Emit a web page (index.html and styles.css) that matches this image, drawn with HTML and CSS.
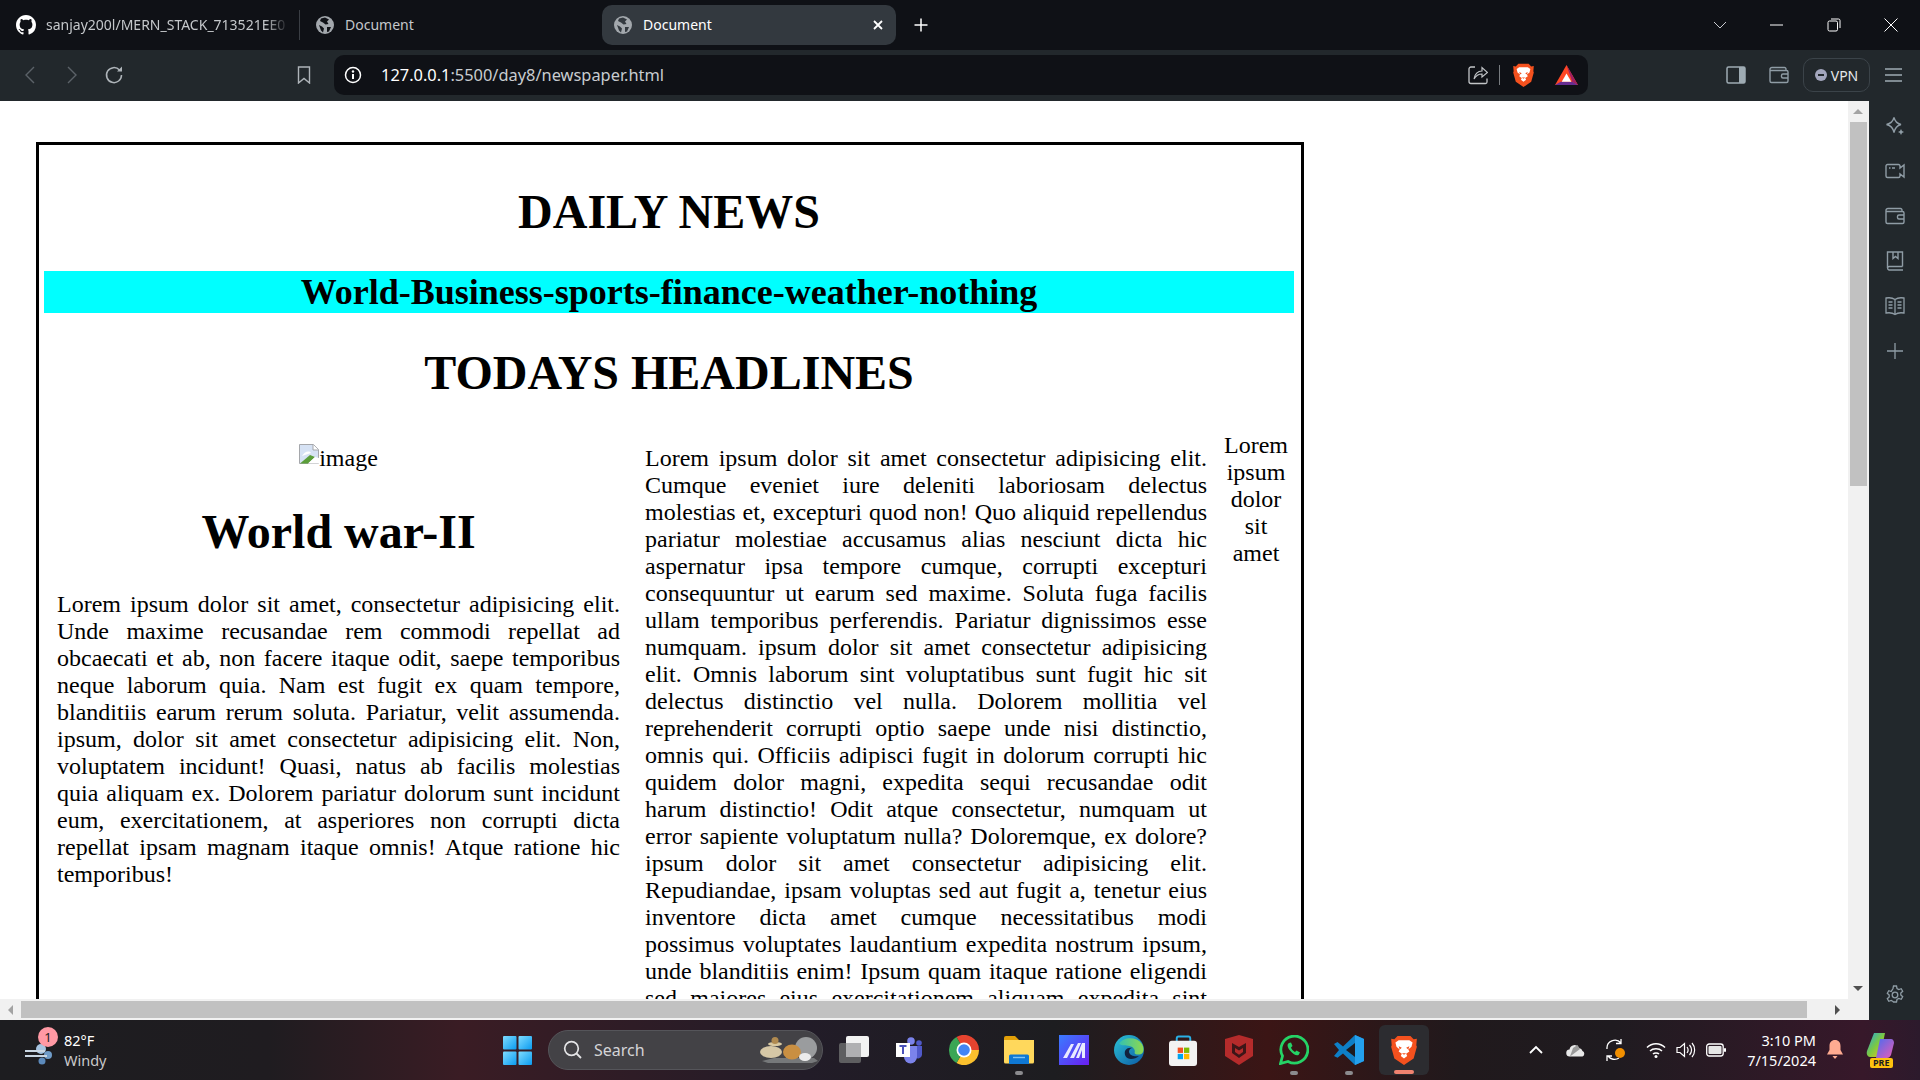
FILE: index.html
```html
<!DOCTYPE html>
<html lang="en">
<head>
    <meta charset="UTF-8" />
    <title>Document</title>
    <link rel="stylesheet" href="styles.css">
</head>
<body>
<div class="browser">

    <div class="titlebar">
        <div class="tab tab-first">
            <svg class="tab-icon" viewBox="0 0 16 16" width="20" height="20"><path fill="#fff" d="M8 0C3.58 0 0 3.58 0 8c0 3.54 2.29 6.53 5.47 7.59.4.07.55-.17.55-.38 0-.19-.01-.82-.01-1.49-2.01.37-2.53-.49-2.69-.94-.09-.23-.48-.94-.82-1.13-.28-.15-.68-.52-.01-.53.63-.01 1.08.58 1.23.82.72 1.21 1.87.87 2.33.66.07-.52.28-.87.51-1.07-1.78-.2-3.64-.89-3.64-3.95 0-.87.31-1.59.82-2.15-.08-.2-.36-1.02.08-2.12 0 0 .67-.21 2.2.82.64-.18 1.32-.27 2-.27.68 0 1.36.09 2 .27 1.53-1.04 2.2-.82 2.2-.82.44 1.1.16 1.92.08 2.12.51.56.82 1.27.82 2.15 0 3.07-1.87 3.75-3.65 3.95.29.25.54.73.54 1.48 0 1.07-.01 1.93-.01 2.2 0 .21.15.46.55.38A8.013 8.013 0 0016 8c0-4.42-3.58-8-8-8z"/></svg>
            <span class="tab-title tab-title-fade">sanjay200l/MERN_STACK_713521EE0</span>
        </div>
        <div class="tab tab-second">
            <svg class="tab-icon" viewBox="0 0 20 20" width="20" height="20"><circle cx="10" cy="10" r="9" fill="#a3a8ad"/><path fill="#0f1116" d="M10 2.5 6 3.6 5 6l3 1.5 2.5 2 3-.5L12 6.500 14 4.500zM4 10l3 1.500 2 2-1 4-2-2zM12 12h4l-2 4.500-2 .5z"/></svg>
            <span class="tab-title">Document</span>
        </div>
        <div class="tab tab-active">
            <svg class="tab-icon" viewBox="0 0 20 20" width="20" height="20"><circle cx="10" cy="10" r="9" fill="#a3a8ad"/><path fill="#33393f" d="M10 2.500 6 3.600 5 6l3 1.500 2.500 2 3-.5L12 6.500 14 4.500zM4 10l3 1.500 2 2-1 4-2-2zM12 12h4l-2 4.500-2 .5z"/></svg>
            <span class="tab-title tab-title-active">Document</span>
            <svg class="tab-close" viewBox="0 0 12 12" width="12" height="12"><path d="M2 2l8 8M10 2l-8 8" stroke="#fff" stroke-width="1.800"/></svg>
        </div>
        <svg class="tab-new" viewBox="0 0 16 16" width="16" height="16"><path d="M8 1.500v13M1.500 8h13" stroke="#fff" stroke-width="1.500"/></svg>
        <div class="window-controls">
            <div class="win-btn"><svg viewBox="0 0 14 8" width="14" height="8"><path d="M1 1l6 6 6-6" fill="none" stroke="#c9ccd0" stroke-width="1"/></svg></div>
            <div class="win-btn"><svg viewBox="0 0 14 2" width="14" height="2"><path d="M0 1h13" stroke="#fff" stroke-width="1"/></svg></div>
            <div class="win-btn"><svg viewBox="0 0 14 14" width="14" height="14"><rect x="1" y="3" width="9.500" height="10" rx="1.500" fill="none" stroke="#fff"/><path d="M4 1h7.500A1.500 1.500 0 0 1 13 2.500V10" fill="none" stroke="#fff"/></svg></div>
            <div class="win-btn"><svg viewBox="0 0 14 14" width="14" height="14"><path d="M.5.500l13 13M13.500.500l-13 13" stroke="#fff" stroke-width="1"/></svg></div>
        </div>
    </div>

    <div class="toolbar">
        <div class="nav-btn"><svg viewBox="0 0 12 20" width="12" height="20"><path d="M10 2 2 10l8 8" fill="none" stroke="#5b6268" stroke-width="1.400"/></svg></div>
        <div class="nav-btn"><svg viewBox="0 0 12 20" width="12" height="20"><path d="M2 2l8 8-8 8" fill="none" stroke="#5b6268" stroke-width="1.400"/></svg></div>
        <div class="nav-btn"><svg viewBox="0 0 20 20" width="20" height="20"><path d="M15.500 5A7.500 7.500 0 1 0 17.500 10" fill="none" stroke="#aeb4b9" stroke-width="1.500"/><path d="M13 6.500h5v-5z" fill="#aeb4b9"/></svg></div>
        <div class="bookmark-btn"><svg viewBox="0 0 14 18" width="14" height="18"><path d="M1.500 1h11v16L7 12.500 1.500 17z" fill="none" stroke="#aeb4b9" stroke-width="1.400"/></svg></div>
        <div class="address-bar">
            <svg class="info-icon" viewBox="0 0 18 18" width="18" height="18"><circle cx="9" cy="9" r="7.500" fill="none" stroke="#fff" stroke-width="1.500"/><path d="M9 8v5" stroke="#fff" stroke-width="2"/><circle cx="9" cy="5.500" r="1.200" fill="#fff"/></svg>
            <span class="url"><span class="url-host">127.0.0.1</span>:5500/day8/newspaper.html</span>
            <svg class="share-icon" viewBox="0 0 20 20" width="20" height="20"><path d="M7 2.500H3A2 2 0 0 0 1 4.500V17a2 2 0 0 0 2 2h14.500a1.500 1.500 0 0 0 1.500-1.500V14" transform="translate(0 -.500)" fill="none" stroke="#c2c5c8" stroke-width="1.300"/><path d="M6 14C6.500 9 10 6 14 6V2.500L19.500 7.500 14 12V9c-3 0-6 1.500-8 5z" fill="none" stroke="#c2c5c8" stroke-width="1.200"/></svg>
            <span class="addr-divider"></span>
            <svg class="brave-small" viewBox="0 0 24 28" width="21" height="24"><use href="#brave-lion"/></svg>
            <svg class="bat-icon" viewBox="0 0 24 22" width="23" height="21"><path d="M12 0 24 21H0z" fill="#ff4724"/><path d="M12 0 24 21 18 17.500z" fill="#9e1f63"/><path d="M0 21h24l-6-3.500H6z" fill="#662d91"/><path d="M12 9l5 8.500H7z" fill="#fff"/></svg>
        </div>
        <div class="tool-btn tool-panel"><svg viewBox="0 0 20 18" width="20" height="18"><rect x="1" y="1" width="18" height="16" rx="1.500" fill="none" stroke="#9eabb3" stroke-width="1.500"/><rect x="13" y="1" width="6" height="16" fill="#9eabb3"/></svg></div>
        <div class="tool-btn tool-wallet"><svg viewBox="0 0 20 18" width="20" height="18"><use href="#wallet-shape"/></svg></div>
        <div class="vpn-pill"><span class="vpn-dot"></span>VPN</div>
        <div class="menu-btn"><svg viewBox="0 0 18 14" width="18" height="14"><path d="M0 1h17M0 7h17M0 13h17" stroke="#9eabb3" stroke-width="1.400"/></svg></div>
    </div>

    <div class="main">
        <div class="content">
            <div class="content-row">
                <div class="page">
                    <div class="newspaper">
                        <h1 class="title">DAILY NEWS</h1>
                        <h2 class="nav-strip">World-Business-sports-finance-weather-nothing</h2>
                        <h1 class="title">TODAYS HEADLINES</h1>
                        <div class="columns">
                            <div class="col-left">
                                <div class="image-line">
                                    <svg class="broken-img" viewBox="0 0 20 20" width="20" height="20"><path d="M.500.500h14l5 5v14H.500z" fill="#d6e2f4" stroke="#a5a7ab"/><path d="M14 .500v5.500h5.500" fill="#fff" stroke="#a5a7ab"/><path d="M3 12c2-4 7-6 9-3l-9 3z" fill="#fff"/><path d="M1 19.500 11 11l5 2-7 6.500z" fill="#5b9e3a"/><path d="M9 19.500 16 13l4 1v5.500z" fill="#fff"/></svg>image
                                </div>
                                <h1 class="title">World war-II</h1>
                                <p class="story">Lorem ipsum dolor sit amet, consectetur adipisicing elit. Unde maxime recusandae rem commodi repellat ad obcaecati et ab, non facere itaque odit, saepe temporibus neque laborum quia. Nam est fugit ex quam tempore, blanditiis earum rerum soluta. Pariatur, velit assumenda. ipsum, dolor sit amet consectetur adipisicing elit. Non, voluptatem incidunt! Quasi, natus ab facilis molestias quia&nbsp;aliquam ex. Dolorem pariatur dolorum sunt incidunt eum, exercitationem, at asperiores non corrupti dicta repellat ipsam magnam itaque omnis! Atque ratione hic temporibus!</p>
                            </div>
                            <div class="col-middle">
                                <p class="story">Lorem ipsum dolor sit amet consectetur adipisicing elit. Cumque eveniet iure deleniti laboriosam delectus molestias et, excepturi quod non! Quo aliquid repellendus pariatur molestiae accusamus alias nesciunt dicta hic aspernatur ipsa tempore cumque, corrupti excepturi consequuntur ut earum sed maxime. Soluta fuga facilis ullam temporibus perferendis. Pariatur dignissimos esse numquam. ipsum dolor sit amet consectetur adipisicing elit. Omnis laborum sint voluptatibus sunt fugit hic sit delectus distinctio vel nulla. Dolorem mollitia vel reprehenderit corrupti optio saepe unde nisi distinctio, omnis qui. Officiis adipisci fugit in dolorum corrupti hic quidem dolor magni, expedita sequi recusandae odit harum distinctio! Odit atque consectetur, numquam ut error sapiente voluptatum nulla? Doloremque, ex dolore? ipsum dolor sit amet consectetur adipisicing elit. Repudiandae, ipsam voluptas sed aut fugit a, tenetur eius inventore dicta amet cumque necessitatibus modi possimus voluptates laudantium expedita nostrum ipsum, unde blanditiis enim! Ipsum quam itaque ratione eligendi sed maiores eius exercitationem aliquam expedita sint quia.</p>
                            </div>
                            <div class="col-right">Lorem ipsum dolor sit amet</div>
                        </div>
                    </div>
                </div>
                <div class="v-scroll">
                    <div class="scroll-btn"><span class="arrow-up"></span></div>
                    <div class="v-thumb"></div>
                    <div class="v-track"></div>
                    <div class="scroll-btn"><span class="arrow-down"></span></div>
                </div>
            </div>
            <div class="h-scroll">
                <div class="h-btn"><span class="arrow-left"></span></div>
                <div class="h-thumb"></div>
                <div class="h-track"></div>
                <div class="h-btn"><span class="arrow-right"></span></div>
                <div class="scroll-corner"></div>
            </div>
        </div>
        <div class="sidebar">
            <svg viewBox="0 0 20 20" width="20" height="20"><path d="M9 1.500c1 4 3 6 7 7-4 1-6 3-7 8-1-5-3-7-7.500-8C6 7.500 8 5.500 9 1.500z" fill="none" stroke="#8f9ca5" stroke-width="1.400"/><path d="M16 13l1 2 2 1-2 1-1 2-1-2-2-1 2-1z" fill="#8f9ca5"/></svg>
            <svg viewBox="0 0 20 16" width="20" height="16"><path d="M15 5V3a1.500 1.500 0 0 0-1.500-1.500h-11A1.500 1.500 0 0 0 1 3v10a1.500 1.500 0 0 0 1.500 1.500h11A1.500 1.500 0 0 0 15 13v-2l4 3V2z" fill="none" stroke="#8f9ca5" stroke-width="1.400"/><path d="M4 5h1.500M7 5h3" stroke="#8f9ca5" stroke-width="1.400"/></svg>
            <svg viewBox="0 0 20 18" width="20" height="18"><use href="#wallet-shape"/></svg>
            <svg viewBox="0 0 18 20" width="18" height="20"><path d="M16.500 15.500H3A1.800 1.800 0 0 0 3 19h14M1.500 17V1h15v14.500M7 1v6.500l2.500-2 2.500 2V1" fill="none" stroke="#8f9ca5" stroke-width="1.400"/></svg>
            <svg viewBox="0 0 20 20" width="20" height="20"><path d="M10 3.500C8 2 4 1.500 1 2v15c3-.5 7 0 9 1.500 2-1.500 6-2 9-1.500V2c-3-.5-7 0-9 1.500zM10 3.500v15M3.500 6h4M3.500 9h4M3.500 12h4M12.500 6h4M12.500 9h4M12.500 12h4" fill="none" stroke="#8f9ca5" stroke-width="1.300"/></svg>
            <svg viewBox="0 0 16 16" width="16" height="16"><path d="M8 0v16M0 8h16" stroke="#8f9ca5" stroke-width="1.300"/></svg>
            <svg class="side-gear" viewBox="0 0 20 20" width="20" height="20"><path d="M8.500 1h3l.5 2.500 1.800 1 2.400-.8 1.500 2.600-1.900 1.700v2l1.900 1.700-1.500 2.600-2.400-.8-1.800 1-.5 2.500h-3L8 16.500l-1.800-1-2.400.8-1.500-2.600 1.900-1.700v-2L2.300 8.300l1.500-2.600 2.400.8L8 3.500z" fill="none" stroke="#8f9ca5" stroke-width="1.300"/><circle cx="10" cy="10" r="2.800" fill="none" stroke="#8f9ca5" stroke-width="1.300"/></svg>
        </div>
    </div>

    <div class="taskbar">
        <div class="weather">
            <svg class="weather-icon" viewBox="0 0 32 24" width="32" height="24"><circle cx="17" cy="8" r="5" fill="#a6c4e0"/><circle cx="24" cy="14" r="4" fill="#6f9cc8"/><circle cx="18" cy="20" r="3.500" fill="#5c8abb"/><path d="M1 10h20M1 15h22" stroke="#c9d6e2" stroke-width="2.200"/></svg>
            <span class="badge">1</span>
            <div class="weather-text"><span>82°F</span><span class="weather-sub">Windy</span></div>
        </div>
        <svg class="start" viewBox="0 0 29 29" width="29" height="29"><defs><linearGradient id="win" x1="0" y1="0" x2="1" y2="1"><stop offset="0" stop-color="#7fdcff"/><stop offset="1" stop-color="#0a9bf0"/></linearGradient></defs><rect width="13.500" height="13.500" rx="1" fill="url(#win)"/><rect x="15.500" width="13.500" height="13.500" rx="1" fill="url(#win)"/><rect y="15.500" width="13.500" height="13.500" rx="1" fill="url(#win)"/><rect x="15.500" y="15.500" width="13.500" height="13.500" rx="1" fill="url(#win)"/></svg>
        <div class="search">
            <svg viewBox="0 0 20 20" width="20" height="20"><circle cx="8.500" cy="8.500" r="6.800" fill="none" stroke="#e4e4e6" stroke-width="1.700"/><path d="M13.500 13.500 18 18" stroke="#e4e4e6" stroke-width="1.800"/></svg>
            <span class="search-text">Search</span>
            <svg class="pebbles" viewBox="0 0 60 26" width="60" height="26"><path d="M2 24 14 21h40l4 3-6 2H8z" fill="#76787a"/><circle cx="46" cy="11" r="11" fill="#9a9c9e"/><ellipse cx="15" cy="7" rx="7" ry="2" fill="#d9c8a0"/><circle cx="15" cy="3.500" r="3.500" fill="#b08a50"/><ellipse cx="11" cy="15" rx="11" ry="6" fill="#d6c7a6"/><ellipse cx="32" cy="15" rx="9" ry="7.500" fill="#c98f42"/><ellipse cx="45" cy="20" rx="6" ry="4" fill="#ececec"/></svg>
        </div>
        <div class="task-item"><svg viewBox="0 0 30 30" width="30" height="30"><rect y="8" width="22" height="20" rx="2" fill="#5e5e60"/><rect x="7" y="1" width="23" height="21" rx="2" fill="#f2f2f2"/><rect x="7" y="8" width="15" height="14" fill="#b0b0b2"/></svg></div>
        <div class="task-item"><svg viewBox="0 0 28 28" width="28" height="28"><circle cx="16" cy="5" r="3.800" fill="#7b83eb"/><circle cx="24" cy="7" r="2.800" fill="#5059c9"/><path d="M20 10h7v9a4 4 0 0 1-7 2z" fill="#5059c9"/><path d="M9 10h13v11a6.500 6.500 0 0 1-13 0z" fill="#7b83eb"/><rect x="1" y="7" width="14" height="14" fill="#fff"/><path d="M4.500 10h7M8 10v8" stroke="#4b53bc" stroke-width="2"/></svg></div>
        <div class="task-item"><svg viewBox="0 0 30 30" width="30" height="30"><path d="M15 15 7.500 2A15 15 0 0 1 30 15z" fill="#e5432f"/><path d="M15 15h15A15 15 0 0 1 7.500 28z" fill="#fbc02d"/><path d="M15 15 7.500 28A15 15 0 0 1 7.500 2z" fill="#3aa655"/><circle cx="15" cy="15" r="7.500" fill="#fff"/><circle cx="15" cy="15" r="5.800" fill="#4285f4"/></svg></div>
        <div class="task-item"><svg viewBox="0 0 30 28" width="30" height="28"><path d="M0 2a2 2 0 0 1 2-2h9l4 4h-15z" fill="#e3a008"/><path d="M0 4h30v22a1.500 1.500 0 0 1-1.500 1.500h-27A1.500 1.500 0 0 1 0 26z" fill="#ffd85c"/><path d="M5 20a1.500 1.500 0 0 1 1.500-1.500h17A1.500 1.500 0 0 1 25 20v8H5z" fill="#0f78d4"/><path d="M9 21.500h12" stroke="#7cc3f5" stroke-width="1.400"/></svg><span class="run-dot"></span></div>
        <div class="task-item"><svg viewBox="0 0 30 30" width="30" height="30"><defs><linearGradient id="aiapp" x1="0" y1="0" x2="1" y2="1"><stop offset="0" stop-color="#3a7cff"/><stop offset="1" stop-color="#6a1ef0"/></linearGradient></defs><rect width="30" height="30" fill="url(#aiapp)"/><path d="M4 23 12 9h3L8 23zM11 23 19 8h3l-7 15zM17 23 23 8h3v15h-3v-8l-3 8z" fill="#e8eaff"/></svg></div>
        <div class="task-item"><svg viewBox="0 0 30 30" width="30" height="30"><defs><linearGradient id="edge1" x1="0" y1="0" x2="1" y2="1"><stop offset="0" stop-color="#2cc3d5"/><stop offset="1" stop-color="#0c59a4"/></linearGradient><linearGradient id="edge2" x1="0" y1="0" x2="1" y2="0"><stop offset="0" stop-color="#35c1b0"/><stop offset="1" stop-color="#8dd94e"/></linearGradient></defs><circle cx="15" cy="15" r="15" fill="url(#edge1)"/><path d="M5 9C9 2 22 1 28 9c2 3 2 7 .5 9-2 2-7 2-8 0 1-2 0-6-5-7-4-1-7 0-10.500-2z" fill="url(#edge2)"/><path d="M17 24c-5 0-7-4-6-8 1-3 5-4 8-3-3 0-4 2-4 4 1 4 6 5 10 4-2 2-5 3-8 3z" fill="#12233f"/></svg></div>
        <div class="task-item"><svg viewBox="0 0 30 32" width="29" height="31"><path d="M8 8V3.500A2 2 0 0 1 10 1.500h10A2 2 0 0 1 22 3.500V8" fill="none" stroke="#2ab0e6" stroke-width="2"/><rect y="6" width="29" height="26" rx="3" fill="#f3f3f3"/><rect x="9" y="13" width="5.500" height="5.500" fill="#f25022"/><rect x="15.500" y="13" width="5.500" height="5.500" fill="#7fba00"/><rect x="9" y="19.500" width="5.500" height="5.500" fill="#00a4ef"/><rect x="15.500" y="19.500" width="5.500" height="5.500" fill="#ffb900"/></svg></div>
        <div class="task-item"><svg viewBox="0 0 28 30" width="28" height="30"><path d="M0 4 14 0 28 4v17L14 30 0 21z" fill="#b52b2b"/><path d="M7 8 14 12 21 8v10l-7 5-7-5z" fill="#3d1618"/><path d="M10 13 14 15.500 18 13v4l-4 2.800-4-2.800z" fill="#b52b2b"/></svg></div>
        <div class="task-item"><svg viewBox="0 0 30 30" width="30" height="30"><path d="M1.500 28.500 3.500 21A13.500 13.500 0 1 1 9 26.500z" fill="none" stroke="#25d366" stroke-width="2.800"/><path d="M10 8c-2 1-2 4 1 7.500s6 5.500 8.500 4.500l1.500-2.500-3.500-2-1.500 1.500c-2-1-3.500-3-4-4.500L13.500 11l-1.500-3.500z" fill="#25d366"/></svg><span class="run-dot"></span></div>
        <div class="task-item"><svg viewBox="0 0 30 30" width="30" height="30"><path d="M21 0 30 4v22l-9 4-12-11.500-5.500 4.300L0 21l5-6-5-6 3.500-2L9 11.500z" fill="#0e7fc7"/><path d="M21 0 30 4v22l-9 4z" fill="#24a0ed"/><path d="M21 8 12 15l9 7z" fill="#1d1b20"/></svg><span class="run-dot"></span></div>
        <div class="task-item task-active"><svg viewBox="0 0 24 28" width="26" height="30"><use href="#brave-lion"/></svg><span class="run-bar"></span></div>

        <div class="tray">
            <div class="tray-item"><svg viewBox="0 0 14 10" width="14" height="10"><path d="M1 8l6-6 6 6" fill="none" stroke="#fff" stroke-width="1.800"/></svg></div>
            <div class="tray-item"><svg viewBox="0 0 20 14" width="20" height="14"><path d="M4 13.500a3.500 3.500 0 0 1-.5-7 5 5 0 0 1 9.500-1.500 4 4 0 0 1 3.500 3 3 3 0 0 1 0 5.500z" fill="#e8e8e8"/><path d="M7 5 11.500 2 14 6 4 13.500z" fill="#9a9a9a"/></svg></div>
            <div class="tray-item"><svg viewBox="0 0 22 24" width="22" height="24"><path d="M2 11a8 8 0 0 1 14-6M16 1v4.500h-5M14 20a8 8 0 0 1-11-2M2 23v-5h5" fill="none" stroke="#fff" stroke-width="1.300"/><circle cx="15" cy="15" r="5" fill="#f18f00"/></svg></div>
            <div class="tray-item tray-narrow"><svg viewBox="0 0 20 16" width="20" height="16"><path d="M1 5.500c5-5 13-5 18 0M4 9c3-3 9-3 12 0M7 12c1.500-1.500 4.500-1.500 6 0" fill="none" stroke="#fff" stroke-width="1.500"/><circle cx="10" cy="14.500" r="1.500" fill="#fff"/></svg></div>
            <div class="tray-item tray-narrow"><svg viewBox="0 0 20 16" width="20" height="16"><path d="M1 5.500h3L8.500 1.500v13L4 10.500H1z" fill="none" stroke="#fff" stroke-width="1.200"/><path d="M11 5c1.500 2 1.500 4 0 6M13.500 3c2.500 3 2.500 7 0 10M16 1c3.500 4 3.500 10 0 14" fill="none" stroke="#fff" stroke-width="1.200"/></svg></div>
            <div class="tray-item tray-narrow"><svg viewBox="0 0 20 14" width="20" height="14"><rect x=".700" y="1" width="16.500" height="12" rx="2.500" fill="none" stroke="#fff" stroke-width="1.300"/><rect x="2.500" y="3" width="13" height="8" rx="1" fill="#e6e6e6"/><rect x="18" y="5" width="2" height="4" rx="1" fill="#fff"/></svg></div>
            <div class="clock"><span>3:10 PM</span><span>7/15/2024</span></div>
            <svg class="bell" viewBox="0 0 16 20" width="16" height="20"><path d="M8 0c3.500 0 5.500 2.500 5.500 6v4l2.500 4.500H0L2.500 10V6C2.500 2.500 4.500 0 8 0z" fill="#ffab91"/><path d="M5.500 16h5L8 19z" fill="#ffab91"/></svg>
            <div class="copilot">
                <svg viewBox="0 0 28 28" width="28" height="28"><defs><linearGradient id="cop1" x1="0" y1="0" x2="1" y2="1"><stop offset="0" stop-color="#22a5e8"/><stop offset=".5" stop-color="#7ac943"/><stop offset="1" stop-color="#f5c518"/></linearGradient><linearGradient id="cop2" x1="0" y1="0" x2="1" y2="1"><stop offset="0" stop-color="#4a6cf0"/><stop offset="1" stop-color="#ea5bb5"/></linearGradient></defs><path d="M8 2h11l-5 24H5C2 26 0 24 1 20z" fill="url(#cop1)"/><path d="M14 8h11c2 0 3 2 3 4l-3 12c-1 2-2 3-4 3H10z" fill="url(#cop2)"/></svg>
                <span class="pre-tag">PRE</span>
            </div>
        </div>
    </div>
</div>

<svg class="svg-defs" width="0" height="0">
    <defs>
        <g id="brave-lion">
            <path d="M6 1h12l3 3 3-.5-.5 6L24 11l-3 11-9 6-9-6L0 11l.5-1.500L0 3.500 3 4z" fill="#f4511e"/>
            <path d="M7 5h10l3 2-1 4-3 2.500 1 2-3 2 1 2-3 2.500-3-2.500 1-2-3-2 1-2L5 11 4 7z" fill="#fff"/>
            <path d="M7 10.500l3 1.500-2 1.500zM17 10.500l-3 1.500 2 1.500zM10 17h4l-2 1.500z" fill="#f4511e"/>
        </g>
        <g id="wallet-shape">
            <path d="M17 4.500V3A1.500 1.500 0 0 0 15.500 1.500H3A2 2 0 0 0 1 3.500V15A1.500 1.500 0 0 0 2.500 16.500h15A1.500 1.500 0 0 0 19 15V6A1.500 1.500 0 0 0 17.500 4.500H1M19 8h-5a1.500 1.500 0 0 0-1.500 1.500v1A1.500 1.500 0 0 0 14 12h5" fill="none" stroke="#8f9ca5" stroke-width="1.400"/>
        </g>
    </defs>
</svg>
</body>
</html>
```

FILE: styles.css
```css
* {
    box-sizing: border-box;
}
html, body {
    margin: 0;
    height: 100%;
    overflow: hidden;
}
body {
    font-family: "Noto Sans", sans-serif;
    background-color: #fff;
}
.browser {
    display: flex;
    flex-direction: column;
    height: 100vh;
}
.svg-defs {
    position: absolute;
}

/* tabs */
.titlebar {
    display: flex;
    align-items: center;
    height: 50px;
    flex-shrink: 0;
    background-color: #0f1116;
}
.tab {
    display: flex;
    align-items: center;
    height: 40px;
    font-size: 14px;
}
.tab-first {
    width: 300px;
    padding-left: 16px;
    border-right: 1px solid #3a3e44;
    height: 30px;
}
.tab-second {
    width: 302px;
    padding-left: 15px;
}
.tab-active {
    width: 294px;
    padding: 0 12px 0 11px;
    background-color: #33393f;
    border-radius: 10px;
}
.tab-icon {
    flex-shrink: 0;
    margin-right: 10px;
}
.tab-title {
    color: #c4c7ca;
    white-space: nowrap;
    padding-bottom: 2px;
}
.tab-title-fade {
    width: 243px;
    overflow: hidden;
    -webkit-mask-image: linear-gradient(to right, #000 90%, transparent);
    mask-image: linear-gradient(to right, #000 90%, transparent);
}
.tab-title-active {
    color: #fff;
}
.tab-close {
    margin-left: auto;
}
.tab-new {
    margin-left: 17px;
}
.window-controls {
    display: flex;
    margin-left: auto;
    padding-right: 1px;
}
.win-btn {
    display: flex;
    align-items: center;
    justify-content: center;
    width: 57px;
    height: 50px;
}

/* toolbar */
.toolbar {
    display: flex;
    align-items: center;
    height: 51px;
    flex-shrink: 0;
    padding-bottom: 1px;
    background-color: #22282c;
}
.nav-btn {
    display: flex;
    justify-content: center;
    width: 42px;
}
.nav-btn:first-child {
    margin-left: 9px;
}
.bookmark-btn {
    display: flex;
    margin-left: 162px;
    margin-right: 23px;
}
.address-bar {
    display: flex;
    align-items: center;
    width: 1254px;
    height: 40px;
    padding: 0 10px 0 10px;
    border-radius: 10px;
    background-color: #0f1116;
}
.info-icon {
    flex-shrink: 0;
    margin-right: 19px;
}
.url {
    font-size: 16.4px;
    color: #c8ccd0;
    padding-bottom: 1px;
}
.url-host {
    color: #fff;
}
.share-icon {
    margin-left: auto;
}
.addr-divider {
    width: 1px;
    height: 20px;
    margin: 0 13px 0 11px;
    background-color: #777b7f;
}
.bat-icon {
    margin-left: 21px;
}
.tool-btn {
    display: flex;
}
.tool-panel {
    margin-left: 138px;
}
.tool-wallet {
    margin-left: 23px;
}
.vpn-pill {
    display: flex;
    align-items: center;
    justify-content: center;
    gap: 4px;
    width: 67px;
    height: 34px;
    margin-left: 14px;
    border: 1px solid #3b4349;
    border-radius: 10px;
    font-size: 14px;
    color: #e6e9eb;
}
.vpn-dot {
    position: relative;
    width: 12px;
    height: 12px;
    border-radius: 50%;
    background-color: #a3a6bd;
}
.vpn-dot::after {
    content: "";
    position: absolute;
    left: 3px;
    right: 3px;
    top: 5px;
    height: 2px;
    background-color: #22282c;
}
.menu-btn {
    display: flex;
    margin-left: 15px;
}

/* page area */
.main {
    display: flex;
    flex: 1;
    min-height: 0;
}
.content {
    display: flex;
    flex-direction: column;
    flex: 1;
    min-width: 0;
}
.content-row {
    display: flex;
    flex: 1;
    min-height: 0;
}
.page {
    flex: 1;
    min-width: 0;
    overflow: hidden;
    background-color: #fff;
    color: #000;
    font-family: "Liberation Serif", serif;
    font-size: 24px;
    line-height: 27px;
}
.newspaper {
    width: 1268px;
    margin: 41px 0 0 36px;
    padding: 7px 7px 0 5px;
    border: 3px solid #000;
}
.title {
    margin: 32px 0;
    font-size: 48px;
    line-height: 55px;
    font-weight: bold;
    text-align: center;
}
.nav-strip {
    margin: 0;
    font-size: 36px;
    line-height: 42px;
    font-weight: bold;
    text-align: center;
    background-color: #0ff;
}
.columns {
    display: flex;
}
.col-left {
    width: 563px;
    margin-left: 13px;
    padding-top: 12px;
}
.col-middle {
    width: 562px;
    margin-left: 25px;
    padding-top: 13px;
}
.col-right {
    width: 70px;
    margin-left: 14px;
    text-align: center;
}
.image-line {
    text-align: center;
}
.broken-img {
    vertical-align: 2px;
}
.story {
    margin: 0;
    text-align: justify;
}

/* scrollbars */
.v-scroll {
    display: flex;
    flex-direction: column;
    width: 21px;
    flex-shrink: 0;
    background-color: #f1f1f1;
}
.scroll-btn {
    display: flex;
    align-items: center;
    justify-content: center;
    height: 21px;
    padding-right: 1px;
}
.arrow-up {
    border: 5px solid transparent;
    border-top: 0;
    border-bottom: 5px solid #a3a3a3;
}
.arrow-down {
    border: 5px solid transparent;
    border-bottom: 0;
    border-top: 5px solid #505050;
}
.v-thumb {
    height: 364px;
    margin: 0 2px 0 2px;
    background-color: #c1c1c1;
}
.v-track {
    flex: 1;
}
.h-scroll {
    display: flex;
    height: 21px;
    flex-shrink: 0;
    background-color: #f1f1f1;
}
.h-btn {
    display: flex;
    align-items: center;
    justify-content: center;
    width: 21px;
}
.arrow-left {
    border: 5px solid transparent;
    border-left: 0;
    border-right: 5px solid #a3a3a3;
}
.arrow-right {
    border: 5px solid transparent;
    border-right: 0;
    border-left: 5px solid #505050;
}
.h-thumb {
    width: 1786px;
    height: 17px;
    margin-top: 2px;
    background-color: #c1c1c1;
}
.h-track {
    flex: 1;
}
.scroll-corner {
    width: 21px;
    background-color: #f1f1f1;
}
.sidebar {
    display: flex;
    flex-direction: column;
    align-items: center;
    gap: 25px;
    width: 51px;
    flex-shrink: 0;
    padding-top: 15px;
    background-color: #22282c;
}
.sidebar svg {
    height: 20px;
}
.side-gear {
    margin-top: auto;
    margin-bottom: 15px;
}

/* taskbar */
.taskbar {
    display: flex;
    align-items: center;
    height: 60px;
    flex-shrink: 0;
    color: #fff;
    background: linear-gradient(90deg, #1d1d20 0%, #1f1c20 14%, #3a1c24 24%, #221c28 42%, #1d1d20 55%, #3b1515 66%, #20191c 76%, #1f1b20 84%, #37182a 97%, #2c1a2c 100%);
}
.weather {
    position: relative;
    display: flex;
    align-items: center;
    width: 503px;
    padding-left: 24px;
}
.weather-icon {
    margin-top: 6px;
    margin-right: 8px;
}
.badge {
    position: absolute;
    left: 38px;
    top: -3px;
    width: 20px;
    height: 20px;
    line-height: 20px;
    text-align: center;
    border-radius: 50%;
    font-size: 13px;
    color: #1d1d20;
    background-color: #ff99a4;
}
.weather-text {
    display: flex;
    flex-direction: column;
    font-size: 14.5px;
    line-height: 20px;
}
.weather-sub {
    color: #c9c9cb;
}
.start {
    flex-shrink: 0;
}
.search {
    display: flex;
    align-items: center;
    width: 275px;
    height: 40px;
    margin: 0 3px 0 16px;
    padding: 0 2px 0 14px;
    border-radius: 20px;
    border: 1px solid #55555a;
    background-color: #434246;
}
.search-text {
    margin-left: 11px;
    font-size: 16px;
    color: #d4d4d6;
}
.pebbles {
    margin-left: auto;
}
.task-item {
    position: relative;
    display: flex;
    align-items: center;
    justify-content: center;
    width: 55px;
    height: 50px;
    flex-shrink: 0;
}
.task-active {
    width: 50px;
    margin: 0 2.500px;
    border-radius: 6px;
    background-color: #2c2c30;
}
.run-dot {
    position: absolute;
    left: 50%;
    bottom: 0;
    width: 8px;
    height: 4px;
    margin-left: -4px;
    border-radius: 2px;
    background-color: #8b8b8e;
}
.run-bar {
    position: absolute;
    left: 50%;
    bottom: 1px;
    width: 20px;
    height: 4px;
    margin-left: -10px;
    border-radius: 2px;
    background-color: #f0826f;
}
.tray {
    display: flex;
    align-items: center;
    margin-left: auto;
    padding-right: 24px;
}
.tray-item {
    display: flex;
    justify-content: center;
    width: 40px;
}
.tray-narrow {
    width: 30px;
}
.tray-narrow:nth-child(4) {
    margin-left: 5px;
}
.clock {
    display: flex;
    flex-direction: column;
    align-items: flex-end;
    width: 85px;
    font-size: 14.5px;
    line-height: 20px;
}
.bell {
    margin: 0 20px 0 11px;
}
.copilot {
    position: relative;
    display: flex;
    justify-content: center;
    width: 33px;
    margin-bottom: 10px;
}
.pre-tag {
    position: absolute;
    left: 7px;
    bottom: -9px;
    padding: 0 3px;
    border-radius: 2px;
    font-size: 9px;
    line-height: 10px;
    font-weight: bold;
    color: #1d1d20;
    background-color: #ffc20e;
}
```
